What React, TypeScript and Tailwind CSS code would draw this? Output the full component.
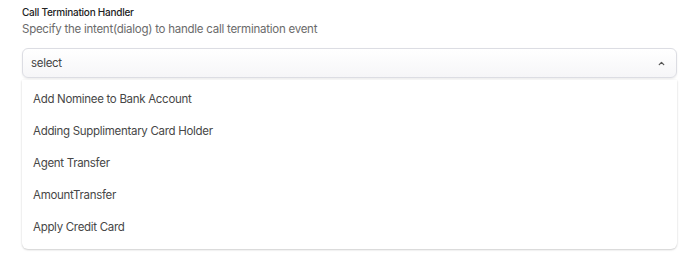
import { useState } from 'react';

const intents = [
  'Add Nominee to Bank Account',
  'Adding Supplimentary Card Holder',
  'Agent Transfer',
  'AmountTransfer',
  'Apply Credit Card',
];

export default function App() {
  const [open, setOpen] = useState(true);
  const [value, setValue] = useState<string | null>(null);

  return (
    <div className="min-h-[254px] w-[700px] bg-white px-[22px] pt-[5px] font-['Inter',sans-serif]">
      <label className="block text-[10px] leading-[14px] font-medium tracking-[-0.25px] text-[#222]">Call Termination Handler</label>
      <p className="mt-[1px] text-[11.5px] leading-[18px] tracking-[-0.25px] text-[#6b6b6b]">
        Specify the intent(dialog) to handle call termination event
      </p>

      <div className="relative mt-[10px] w-[655px]">
        <button
          type="button"
          onClick={() => setOpen(!open)}
          className="flex h-[30px] w-full items-center justify-between rounded-[6px] border border-[#dcdde3] bg-gradient-to-b from-white to-[#f6f6f8] pl-[8px] pr-[10px] text-left shadow-[0_1px_2px_rgba(0,0,0,0.08)]"
        >
          <span className="pt-[1px] text-[11.5px] tracking-[-0.3px] text-[#444]">{value ?? 'select'}</span>
          <svg width="9" height="9" viewBox="0 0 10 10" fill="none" className={open ? '' : 'rotate-180'}>
            <path d="M2.5 6.2 L5 3.7 L7.5 6.2" stroke="#555" strokeWidth="1.4" strokeLinecap="round" strokeLinejoin="round" />
          </svg>
        </button>

        {open && (
          <ul className="mt-[2px] rounded-b-[6px] bg-white pt-[4px] pb-[5px] shadow-[0_1px_2px_rgba(0,0,0,0.18),0_0_3px_rgba(0,0,0,0.04)]">
            {intents.map((it) => (
              <li
                key={it}
                onClick={() => {
                  setValue(it);
                  setOpen(false);
                }}
                className="flex h-[32px] cursor-pointer items-center pl-[11px] text-[11.5px] tracking-[-0.3px] text-[#474747] hover:bg-[#f5f5f7]"
              >
                {it}
              </li>
            ))}
          </ul>
        )}
      </div>
    </div>
  );
}
